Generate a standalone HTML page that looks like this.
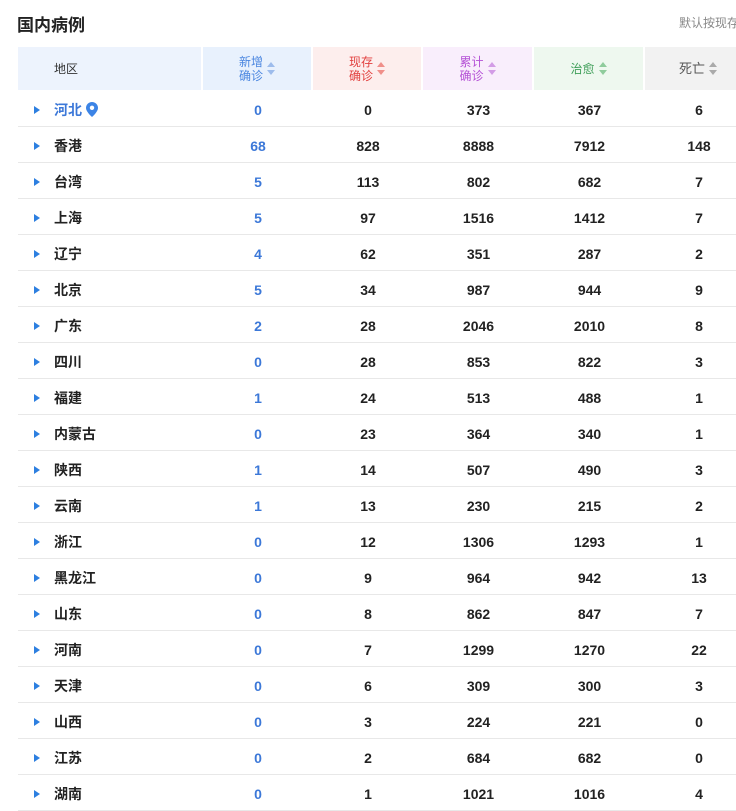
<!DOCTYPE html>
<html><head><meta charset="utf-8">
<style>
*{margin:0;padding:0;box-sizing:border-box}
body{width:736px;height:811px;overflow:hidden;background:#fff;font-family:"Liberation Sans","Noto Sans CJK SC",sans-serif;position:relative}
h1{position:absolute;left:17px;top:11px;font-size:17px;font-weight:bold;color:#222}
.note{position:absolute;left:679px;top:14px;font-size:12px;color:#888;white-space:nowrap}
table{position:absolute;left:18px;top:47px;border-collapse:separate;border-spacing:0;table-layout:fixed;width:735px}
th{height:43px;font-weight:normal;font-size:12px;line-height:14px;border-right:2px solid #fff;text-align:center;vertical-align:middle}
th .w{display:inline-block;vertical-align:middle}
th svg{vertical-align:middle;margin-left:4px}
th.r{background:#edf3fd;color:#333;text-align:left;padding-left:36px}
th.a{background:#e8f1fd;color:#4a86e0}
th.b{background:#fdeeed;color:#e2403f}
th.c{background:#f9eefc;color:#b552d6}
th.d{background:#eef8ef;color:#3e9e58}
th.e{background:#f2f2f2;color:#555}
td{height:36px;padding-top:2px;border-bottom:1px solid #e8e8e8;text-align:center;font-size:14px;font-weight:bold;color:#222;vertical-align:middle}
tbody tr:first-child td{height:37px;padding-top:3px}
td.r{text-align:left;padding-left:16px}
td.r i{display:inline-block;width:0;height:0;border-top:4px solid transparent;border-bottom:4px solid transparent;border-left:6px solid #2d7fe0;margin-right:14px;vertical-align:1px}
td.n{color:#3c78d8}
.blue{color:#3c78d8}
</style></head><body>
<h1>国内病例</h1>
<div class="note">默认按现存</div>
<table>
<colgroup><col style="width:185px"><col style="width:110px"><col style="width:110px"><col style="width:111px"><col style="width:111px"><col style="width:108px"></colgroup>
<thead><tr>
<th class="r">地区</th>
<th class="a"><span class="w">新增<br>确诊</span><svg width="8" height="13"><path d="M4 0L8 5H0Z M4 13L8 8H0Z" fill="#9dbcec"/></svg></th>
<th class="b"><span class="w">现存<br>确诊</span><svg width="8" height="13"><path d="M4 0L8 5H0Z M4 13L8 8H0Z" fill="#f08f8a"/></svg></th>
<th class="c"><span class="w">累计<br>确诊</span><svg width="8" height="13"><path d="M4 0L8 5H0Z M4 13L8 8H0Z" fill="#d39ce6"/></svg></th>
<th class="d"><span class="w">治愈</span><svg width="8" height="13"><path d="M4 0L8 5H0Z M4 13L8 8H0Z" fill="#8fcc9c"/></svg></th>
<th class="e"><span class="w" style="font-size:13px">死亡</span><svg width="8" height="13"><path d="M4 0L8 5H0Z M4 13L8 8H0Z" fill="#aaa"/></svg></th>
</tr></thead>
<tbody>
<tr><td class="r"><i></i><span class="blue">河北</span> <svg width="12" height="15" viewBox="0 0 12 15" style="vertical-align:-2px"><path d="M6 0C2.7 0 0 2.6 0 5.9 0 10 6 15 6 15S12 10 12 5.9C12 2.6 9.3 0 6 0Z" fill="#3c84e6"/><circle cx="6" cy="5.8" r="2.2" fill="#fff"/></svg></td><td class="n">0</td><td>0</td><td>373</td><td>367</td><td>6</td></tr>
<tr><td class="r"><i></i>香港</td><td class="n">68</td><td>828</td><td>8888</td><td>7912</td><td>148</td></tr>
<tr><td class="r"><i></i>台湾</td><td class="n">5</td><td>113</td><td>802</td><td>682</td><td>7</td></tr>
<tr><td class="r"><i></i>上海</td><td class="n">5</td><td>97</td><td>1516</td><td>1412</td><td>7</td></tr>
<tr><td class="r"><i></i>辽宁</td><td class="n">4</td><td>62</td><td>351</td><td>287</td><td>2</td></tr>
<tr><td class="r"><i></i>北京</td><td class="n">5</td><td>34</td><td>987</td><td>944</td><td>9</td></tr>
<tr><td class="r"><i></i>广东</td><td class="n">2</td><td>28</td><td>2046</td><td>2010</td><td>8</td></tr>
<tr><td class="r"><i></i>四川</td><td class="n">0</td><td>28</td><td>853</td><td>822</td><td>3</td></tr>
<tr><td class="r"><i></i>福建</td><td class="n">1</td><td>24</td><td>513</td><td>488</td><td>1</td></tr>
<tr><td class="r"><i></i>内蒙古</td><td class="n">0</td><td>23</td><td>364</td><td>340</td><td>1</td></tr>
<tr><td class="r"><i></i>陕西</td><td class="n">1</td><td>14</td><td>507</td><td>490</td><td>3</td></tr>
<tr><td class="r"><i></i>云南</td><td class="n">1</td><td>13</td><td>230</td><td>215</td><td>2</td></tr>
<tr><td class="r"><i></i>浙江</td><td class="n">0</td><td>12</td><td>1306</td><td>1293</td><td>1</td></tr>
<tr><td class="r"><i></i>黑龙江</td><td class="n">0</td><td>9</td><td>964</td><td>942</td><td>13</td></tr>
<tr><td class="r"><i></i>山东</td><td class="n">0</td><td>8</td><td>862</td><td>847</td><td>7</td></tr>
<tr><td class="r"><i></i>河南</td><td class="n">0</td><td>7</td><td>1299</td><td>1270</td><td>22</td></tr>
<tr><td class="r"><i></i>天津</td><td class="n">0</td><td>6</td><td>309</td><td>300</td><td>3</td></tr>
<tr><td class="r"><i></i>山西</td><td class="n">0</td><td>3</td><td>224</td><td>221</td><td>0</td></tr>
<tr><td class="r"><i></i>江苏</td><td class="n">0</td><td>2</td><td>684</td><td>682</td><td>0</td></tr>
<tr><td class="r"><i></i>湖南</td><td class="n">0</td><td>1</td><td>1021</td><td>1016</td><td>4</td></tr>
</tbody></table>
</body></html>
